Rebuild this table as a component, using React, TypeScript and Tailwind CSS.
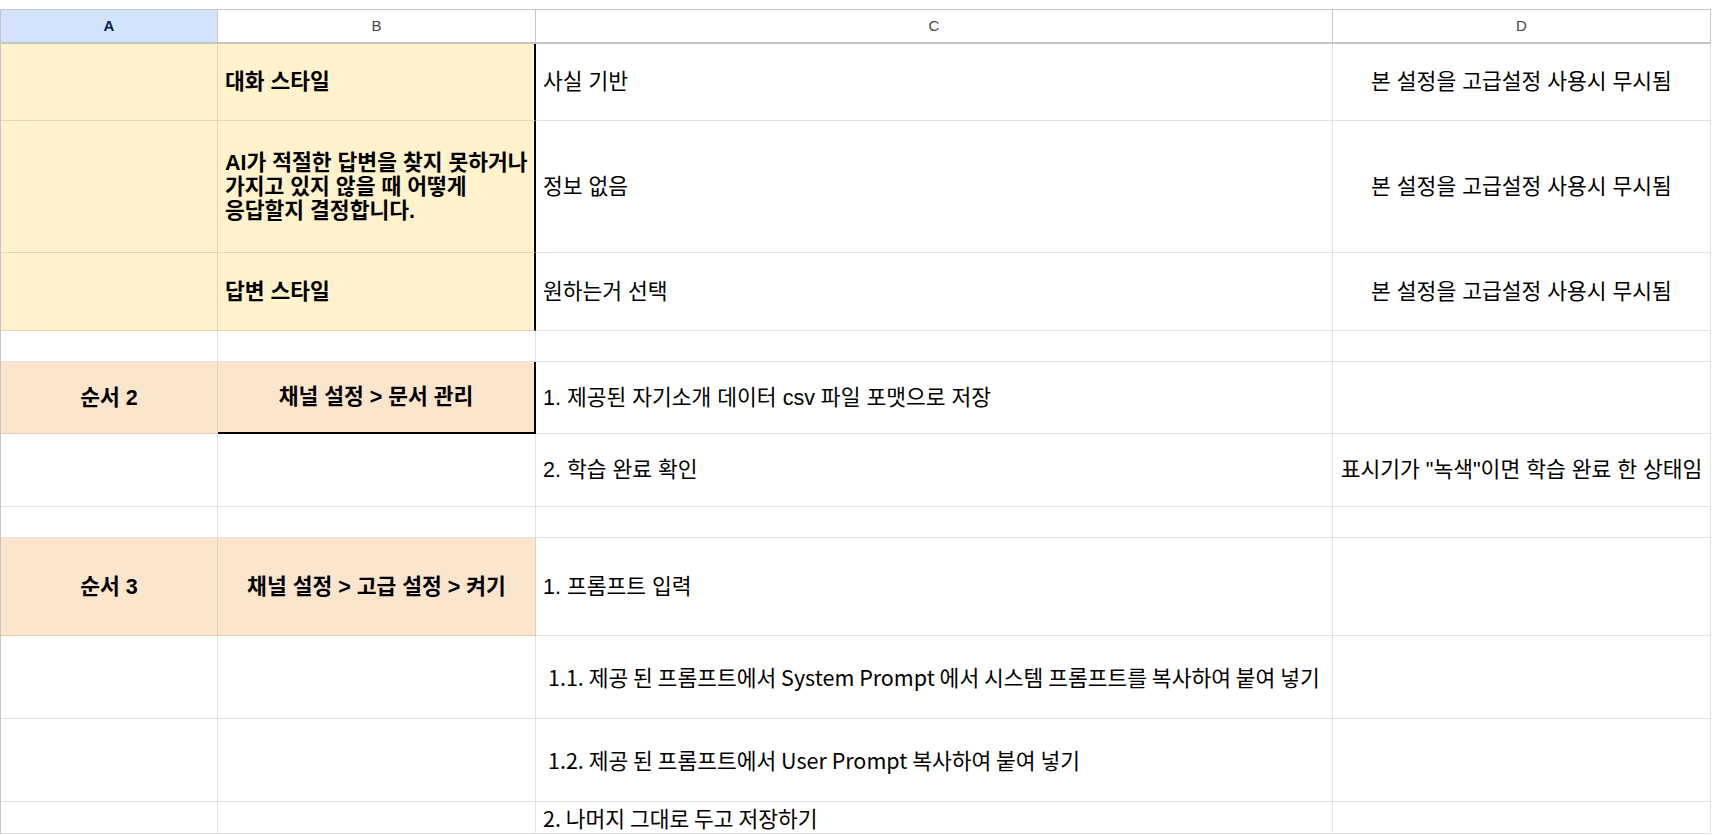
import { ReactNode } from "react"

type Tone = "plain" | "yellow" | "orange"

type CellProps = {
    children?: ReactNode
    tone?: Tone
    center?: boolean
    bold?: boolean
    edge?: "none" | "right" | "rightBottom"
    narrow?: boolean
    indent?: boolean
}

const Cell = ({ children, tone = "plain", center, bold, edge = "none", narrow, indent }: CellProps) => {
    const toneCls =
        tone === "yellow" ? "bg-[#fff2cc] border-[#e4d8b4]"
            : tone === "orange" ? "bg-[#fce5cd] border-[#e8cfb8]"
                : "bg-white border-[#e1e1e1]"

    const edgeCls =
        edge === "right" ? "border-r-2 border-b border-r-black"
            : edge === "rightBottom" ? "border-r-2 border-b-2 border-r-black border-b-black"
                : "border-r border-b"

    return (
        <div
            className={`flex items-center overflow-visible whitespace-nowrap text-[21.5px] leading-[24px] text-black ${toneCls} ${edgeCls}
                ${center ? "justify-center text-center" : "justify-start"}
                ${bold ? "font-bold" : "font-normal"}
                ${narrow ? "font-['Liberation_Sans_Narrow','Noto_Sans_CJK_KR',sans-serif]" : ""}
                ${indent ? "pl-[12px]" : center ? "px-[2px]" : "pl-[7px]"}`}
        >
            {children}
        </div>
    )
}

const Head = ({ label, active }: { label: string, active?: boolean }) => (
    <div
        className={`flex items-center justify-center border-t border-r border-b-2 border-[#c4c7c5] text-[15px]
            ${active ? "bg-[#d3e3fd] font-bold text-[#041e49]" : "bg-white text-[#444746]"}`}
    >
        {label}
    </div>
)

const NOTE = "본 설정을 고급설정 사용시 무시됨"

export default function App() {
    return (
        <div className="w-[1712px] h-[835px] overflow-hidden bg-white pt-[9px] font-['Liberation_Sans','Noto_Sans_CJK_KR',sans-serif]">
            <div className="grid w-[1711px] border-l border-[#c4c7c5] grid-cols-[217px_318px_797px_378px] grid-rows-[35px_77px_132px_78px_31px_72px_73px_31px_98px_83px_83px_32px]">
                <Head label="A" active />
                <Head label="B" />
                <Head label="C" />
                <Head label="D" />

                {/* 대화 스타일 */}
                <Cell tone="yellow" />
                <Cell tone="yellow" bold edge="right">대화 스타일</Cell>
                <Cell>사실 기반</Cell>
                <Cell center>{NOTE}</Cell>

                <Cell tone="yellow" />
                <Cell tone="yellow" bold edge="right">
                    <span>
                        AI가 적절한 답변을 찾지 못하거나<br />
                        가지고 있지 않을 때 어떻게<br />
                        응답할지 결정합니다.
                    </span>
                </Cell>
                <Cell>정보 없음</Cell>
                <Cell center>{NOTE}</Cell>

                <Cell tone="yellow" />
                <Cell tone="yellow" bold edge="right">답변 스타일</Cell>
                <Cell>원하는거 선택</Cell>
                <Cell center>{NOTE}</Cell>

                <Cell />
                <Cell />
                <Cell />
                <Cell />

                {/* 순서 2 */}
                <Cell tone="orange" bold center>순서 2</Cell>
                <Cell tone="orange" bold center edge="rightBottom">채널 설정 &gt; 문서 관리</Cell>
                <Cell>1. 제공된 자기소개 데이터 csv 파일 포맷으로 저장</Cell>
                <Cell />

                <Cell />
                <Cell />
                <Cell>2. 학습 완료 확인</Cell>
                <Cell center>표시기가 "녹색"이면 학습 완료 한 상태임</Cell>

                <Cell />
                <Cell />
                <Cell />
                <Cell />

                {/* 순서 3 */}
                <Cell tone="orange" bold center>순서 3</Cell>
                <Cell tone="orange" bold center>채널 설정 &gt; 고급 설정 &gt; 켜기</Cell>
                <Cell>1. 프롬프트 입력</Cell>
                <Cell />

                <Cell />
                <Cell />
                <Cell narrow indent>1.1. 제공 된 프롬프트에서 System Prompt 에서 시스템 프롬프트를 복사하여 붙여 넣기</Cell>
                <Cell />

                <Cell />
                <Cell />
                <Cell narrow indent>1.2. 제공 된 프롬프트에서 User Prompt 복사하여 붙여 넣기</Cell>
                <Cell />

                <Cell />
                <Cell />
                <Cell narrow>2. 나머지 그대로 두고 저장하기</Cell>
                <Cell />
            </div>
        </div>
    )
}
